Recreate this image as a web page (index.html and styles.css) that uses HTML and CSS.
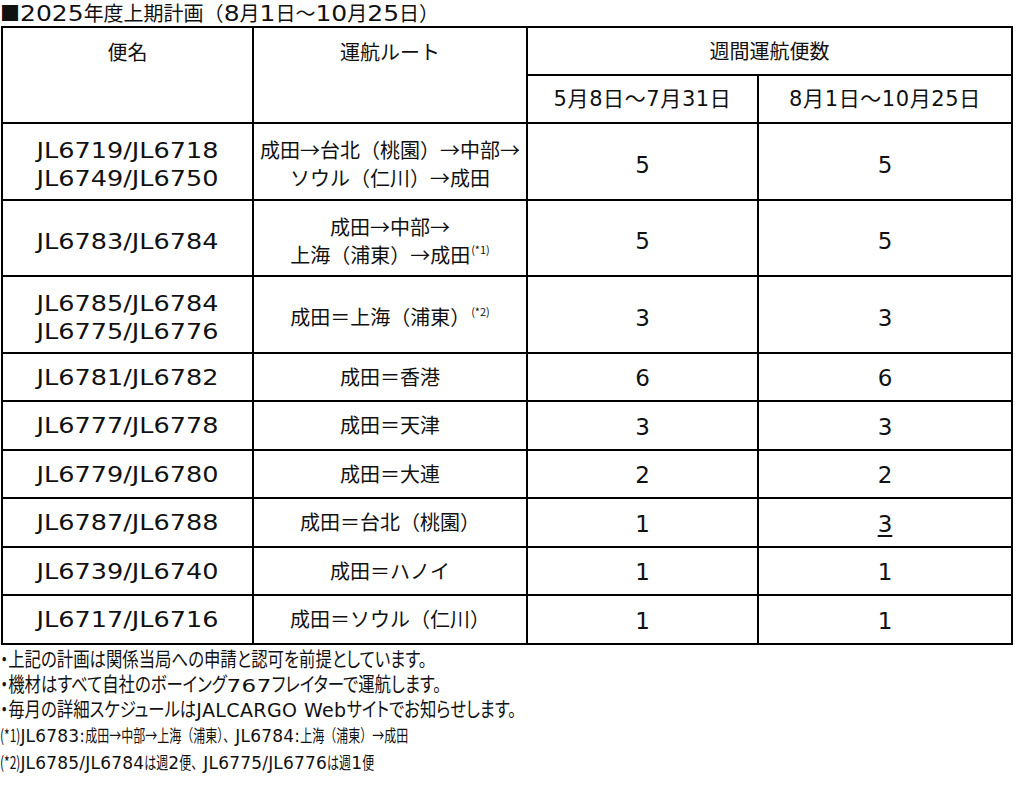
FILE: index.html
```html
<!DOCTYPE html>
<html lang="ja">
<head>
<meta charset="utf-8">
<title>2025年度上期計画</title>
<link rel="stylesheet" href="styles.css">
</head>
<body>
<div class="page">
  <h1 class="title">■<span class="tn">2025</span>年度上期計画（<span class="tn">8</span>月<span class="tn">1</span>日～<span class="tn">10</span>月<span class="tn">25</span>日）</h1>
  <table class="plan">
    <colgroup>
      <col class="c1"><col class="c2"><col class="c3"><col class="c4">
    </colgroup>
    <thead>
      <tr class="h1">
        <th rowspan="2" class="top">便名</th>
        <th rowspan="2" class="top">運航ルート</th>
        <th colspan="2">週間運航便数</th>
      </tr>
      <tr class="h2">
        <th class="date">5月8日～7月31日</th>
        <th class="date">8月1日～10月25日</th>
      </tr>
    </thead>
    <tbody>
      <tr class="tall">
        <td><span class="fl">JL6719/JL6718<br>JL6749/JL6750</span></td>
        <td>成田→台北（桃園）→中部→<br>ソウル（仁川）→成田</td>
        <td class="num">5</td><td class="num">5</td>
      </tr>
      <tr class="tall">
        <td><span class="fl">JL6783/JL6784</span></td>
        <td>成田→中部→<br>上海（浦東）→成田<sup>(*1)</sup></td>
        <td class="num">5</td><td class="num">5</td>
      </tr>
      <tr class="tall">
        <td><span class="fl">JL6785/JL6784<br>JL6775/JL6776</span></td>
        <td>成田＝上海（浦東）<sup>(*2)</sup></td>
        <td class="num">3</td><td class="num">3</td>
      </tr>
      <tr>
        <td><span class="fl">JL6781/JL6782</span></td>
        <td>成田＝香港</td>
        <td class="num">6</td><td class="num">6</td>
      </tr>
      <tr>
        <td><span class="fl">JL6777/JL6778</span></td>
        <td>成田＝天津</td>
        <td class="num">3</td><td class="num">3</td>
      </tr>
      <tr>
        <td><span class="fl">JL6779/JL6780</span></td>
        <td>成田＝大連</td>
        <td class="num">2</td><td class="num">2</td>
      </tr>
      <tr>
        <td><span class="fl">JL6787/JL6788</span></td>
        <td>成田＝台北（桃園）</td>
        <td class="num">1</td><td class="num"><span class="chg">3</span></td>
      </tr>
      <tr>
        <td><span class="fl">JL6739/JL6740</span></td>
        <td>成田＝ハノイ</td>
        <td class="num">1</td><td class="num">1</td>
      </tr>
      <tr>
        <td><span class="fl">JL6717/JL6716</span></td>
        <td>成田＝ソウル（仁川）</td>
        <td class="num">1</td><td class="num">1</td>
      </tr>
    </tbody>
  </table>
  <div class="notes">
    <p class="note"><span class="jp">・上記の計画は関係当局への申請と認可を前提としています。</span></p>
    <p class="note"><span class="jp">・機材はすべて自社のボーイング</span><span class="lat n767">767</span><span class="jp">フレイターで運航します。</span></p>
    <p class="note"><span class="jp">・毎月の詳細スケジュールは</span><span class="lat web">JALCARGO Web</span><span class="jp">サイトでお知らせします。</span></p>
    <p class="note small"><span class="jp">(*1)</span><span class="lat">JL6783:</span><span class="jp">成田→中部→上海（浦東）、</span><span class="lat">JL6784:</span><span class="jp">上海（浦東）→成田</span></p>
    <p class="note small"><span class="jp">(*2)</span><span class="lat">JL6785/JL6784</span><span class="jp">は週</span><span class="lat">2</span><span class="jp">便、</span><span class="lat">JL6775/JL6776</span><span class="jp">は週</span><span class="lat">1</span><span class="jp">便</span></p>
  </div>
</div>
</body>
</html>
```

FILE: styles.css
```css
html, body {
  margin: 0;
  padding: 0;
  background: #fff;
}
body {
  font-family: "Noto Sans CJK JP", "Noto Sans", sans-serif;
  color: #111;
}
.page {
  width: 1016px;
}

/* title */
.title {
  margin: 0;
  font-size: 20px;
  font-weight: 400;
  line-height: 26px;
  height: 26px;
  white-space: nowrap;
}
.tn {
  display: inline-block;
  font-family: "DejaVu Sans", sans-serif;
  font-size: 25px;
  line-height: 1;
  transform: scaleY(0.82);
  transform-origin: 0 0.846em;
}

/* table */
.plan {
  border-collapse: collapse;
  table-layout: fixed;
  width: 1012px;
  margin-left: 1px;
}
.c1 { width: 251px; }
.c2 { width: 274px; }
.c3 { width: 231px; }
.c4 { width: 254px; }
.plan th, .plan td {
  border: 2px solid #000;
  padding: 0;
  text-align: center;
  font-weight: 400;
  font-size: 20px;
  line-height: 28px;
  vertical-align: middle;
}
.plan th.top {
  vertical-align: top;
  padding-top: 10px;
}
.plan th.date {
  font-family: "DejaVu Sans", "Noto Sans CJK JP", sans-serif;
  font-size: 21px;
  letter-spacing: 0.6px;
}
.h1, .h2 { height: 48px; }
.plan tbody tr { height: 48.5px; }
.plan tbody tr.tall { height: 76.5px; }
.plan tbody tr.tall td {
  padding-top: 6px;
}
.fl {
  display: inline-block;
  font-family: "DejaVu Sans", sans-serif;
  font-weight: 400;
  font-size: 25.5px;
  line-height: 32.5px;
  transform: scaleY(0.86);
  vertical-align: middle;
}
.plan td.num {
  font-family: "DejaVu Sans", sans-serif;
  font-size: 23px;
  padding-top: 3px;
}
.plan tbody tr.tall td.num {
  padding-top: 7px;
}
.chg {
  text-decoration: underline;
  text-decoration-thickness: 2px;
  text-underline-offset: 3px;
}
sup {
  font-size: 11px;
  line-height: 0;
  vertical-align: 9px;
  margin-left: 1px;
}

/* notes */
.notes {
  padding-top: 1px;
}
.note {
  margin: 0;
  height: 25px;
  line-height: 25px;
  white-space: nowrap;
  font-size: 20px;
}
.note.small {
  height: 27px;
  line-height: 27px;
  font-size: 17px;
}
.jp {
  display: inline-block;
  font-size: 16.4px;
  line-height: 1;
  font-feature-settings: "palt";
  transform: scaleY(1.22);
  transform-origin: 0 0.936em;
}
.note.small .jp {
  font-size: 12px;
  font-feature-settings: normal;
  transform: scaleY(1.4);
}
.lat {
  font-family: "DejaVu Sans", sans-serif;
  font-size: 17px;
  letter-spacing: 0.2px;
}
.lat.web {
  font-size: 19px;
  letter-spacing: 0.4px;
}
.lat.n767 {
  display: inline-block;
  font-size: 23px;
  line-height: 1;
  letter-spacing: 0.4px;
  transform: scaleY(0.8);
  transform-origin: 0 0.846em;
}
```
